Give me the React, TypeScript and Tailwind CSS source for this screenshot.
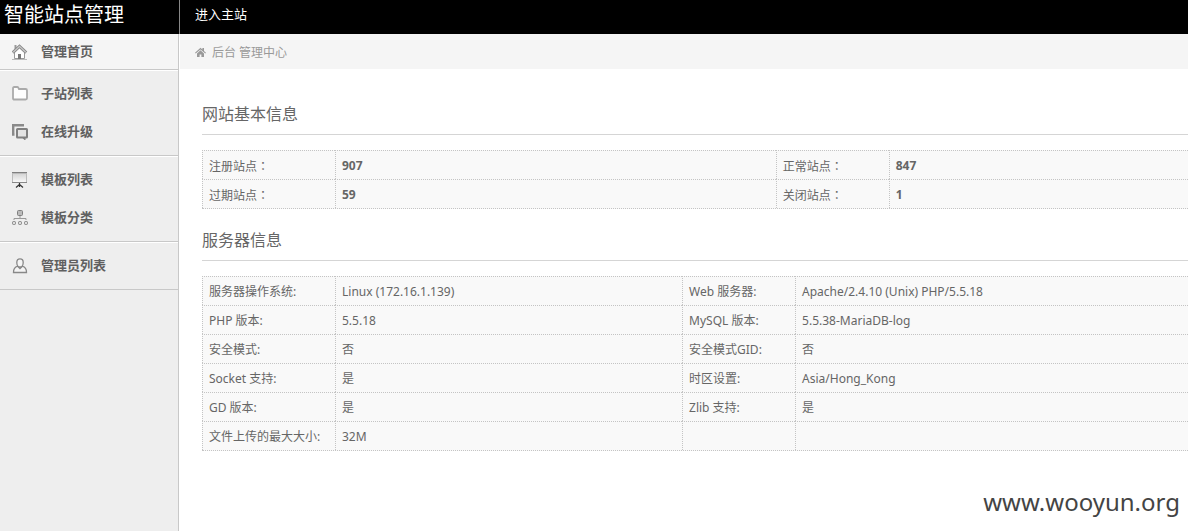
import type { ReactNode } from "react";

interface MenuItem {
  label: string;
  icon: ReactNode;
}

interface InfoTableProps {
  title: string;
  rows: string[][];
  valueWidth: string;
  // summary tables have bold values and full-width colons after the labels
  summary?: boolean;
}

function HomeIcon() {
  return (
    <svg width="16" height="16" viewBox="0 0 16 16" fill="none" aria-hidden="true">
      <path d="M2.5 8.5V14.5H12.5V8.5L7.5 3.8Z" fill="#fff" stroke="#999" />
      <path d="M3.5 1V5" stroke="#999" strokeWidth="2" />
      <path d="M0.8 8.6L7.5 2.2L14.2 8.6" stroke="#888" strokeWidth="3" />
      <path d="M1.2 8.3L7.5 2.3L13.8 8.3" stroke="#c8c8c8" strokeWidth="1.2" />
      <rect x="6" y="10" width="3" height="5" fill="#777" />
      <path d="M0 15.5H15" stroke="#bbb" />
    </svg>
  );
}

function FolderIcon() {
  return (
    <svg width="16" height="16" viewBox="0 0 16 16" aria-hidden="true">
      <path
        d="M1 12.3V2.4Q1 1 2.2 1H5.2Q6 1 6.4 1.8L7 3H13.6Q15 3 15 4.4V12.3Q15 13.5 13.6 13.5H2.4Q1 13.5 1 12.3Z"
        fill="#fdfdfd"
        stroke="#aaa"
        strokeWidth="1.8"
      />
    </svg>
  );
}

function UpgradeIcon() {
  return (
    <svg width="16" height="16" viewBox="0 0 16 16" aria-hidden="true">
      <path d="M2.5 10.5H1.2V1.2H12" fill="none" stroke="#8a8a8a" strokeWidth="2.4" />
      <path d="M10 13.5H13.5V16H12.5Z" fill="#808080" />
      <rect x="5" y="5" width="10" height="8.5" rx="0.5" fill="#e4e4e4" stroke="#808080" strokeWidth="2" />
    </svg>
  );
}

function BoardIcon() {
  return (
    <svg width="16" height="16" viewBox="0 0 16 16" fill="none" aria-hidden="true">
      <defs>
        <linearGradient id="board" x1="0" y1="0" x2="0" y2="1">
          <stop offset="0" stopColor="#d4d4d4" />
          <stop offset="1" stopColor="#fafafa" />
        </linearGradient>
      </defs>
      <rect x="0.5" y="1.5" width="14" height="9" fill="url(#board)" stroke="#bbb" />
      <path d="M0 0.5H15" stroke="#808080" />
      <path d="M0 10.5H15" stroke="#888" />
      <path d="M7.5 11V15M7.5 12.5L4 15.5M7.5 12.5L11 15.5" stroke="#333" strokeWidth="1.2" />
    </svg>
  );
}

function SitemapIcon() {
  return (
    <svg width="16" height="16" viewBox="0 0 16 16" fill="none" aria-hidden="true">
      <rect x="5.5" y="0.5" width="5" height="5" rx="1" fill="#bbb" stroke="#808080" />
      <path d="M8 6V9M2 10V8.5H14V10" stroke="#999" />
      <rect x="0.5" y="11.5" width="3" height="3" rx="1" fill="#ddd" stroke="#808080" />
      <rect x="6.5" y="11.5" width="3" height="3" rx="1" fill="#ddd" stroke="#808080" />
      <rect x="12.5" y="11.5" width="3" height="3" rx="1" fill="#ddd" stroke="#808080" />
    </svg>
  );
}

function UserIcon() {
  return (
    <svg width="16" height="16" viewBox="0 0 16 16" fill="#f4f4f4" stroke="#888" strokeWidth="1.3" aria-hidden="true">
      <path d="M5.6 8.2C2.8 9 1.5 10.4 1.5 14.5H14.5C14.5 10.4 13.2 9 10.4 8.2L8 10.5Z" />
      <path d="M8 0.8C5.8 0.8 4.8 2.2 4.8 4.4C4.8 6.8 6.2 9 8 9C9.8 9 11.2 6.8 11.2 4.4C11.2 2.2 10.2 0.8 8 0.8Z" />
    </svg>
  );
}

function CrumbIcon() {
  return (
    <svg width="11" height="11" viewBox="0 0 11 11" fill="#999" aria-hidden="true">
      <path d="M5.5 0.8L7.4 2.5V1H9V4L11 5.8L10.3 6.6L5.5 2.4L0.7 6.6L0 5.8Z" />
      <path d="M2 6.4L5.5 3.2L9 6.4V10H6.4V7.4H4.6V10H2Z" />
    </svg>
  );
}

const menuGroups: MenuItem[][] = [
  [
    { label: "子站列表", icon: <FolderIcon /> },
    { label: "在线升级", icon: <UpgradeIcon /> },
  ],
  [
    { label: "模板列表", icon: <BoardIcon /> },
    { label: "模板分类", icon: <SitemapIcon /> },
  ],
  [{ label: "管理员列表", icon: <UserIcon /> }],
];

const siteRows = [
  ["注册站点", "907", "正常站点", "847"],
  ["过期站点", "59", "关闭站点", "1"],
];

const serverRows = [
  ["服务器操作系统:", "Linux (172.16.1.139)", "Web 服务器:", "Apache/2.4.10 (Unix) PHP/5.5.18"],
  ["PHP 版本:", "5.5.18", "MySQL 版本:", "5.5.38-MariaDB-log"],
  ["安全模式:", "否", "安全模式GID:", "否"],
  ["Socket 支持:", "是", "时区设置:", "Asia/Hong_Kong"],
  ["GD 版本:", "是", "Zlib 支持:", "是"],
  ["文件上传的最大大小:", "32M", "", ""],
];

function InfoTable({ title, rows, valueWidth, summary }: InfoTableProps) {
  return (
    <section className="pb-[19px]">
      <h2 className="border-b border-[#d5d5d5] pb-2 text-base leading-6">{title}</h2>
      <table className="mt-[15px] w-full table-fixed border-separate border-spacing-0 border-b border-dotted border-[#c4c4c4] bg-[#f9f9f9]">
        <colgroup>
          <col className="w-[133px]" />
          <col className={valueWidth} />
          <col className="w-[113px]" />
          <col />
        </colgroup>
        <tbody>
          {rows.map((row) => (
            <tr key={row[0]}>
              {row.map((cell, i) => (
                <td
                  key={i}
                  className={`h-[29px] whitespace-nowrap border-t border-l border-dotted border-[#c4c4c4] pt-0.5 pl-1.5 leading-5 ${
                    summary && i % 2 === 1 ? "font-bold" : ""
                  }`}
                >
                  {cell}
                  {summary && i % 2 === 0 && (
                    <span className="font-['Noto_Sans_CJK_TC',sans-serif]">：</span>
                  )}
                </td>
              ))}
            </tr>
          ))}
        </tbody>
      </table>
    </section>
  );
}

function MenuLink({ label, icon }: MenuItem) {
  return (
    <a href="#" className="flex h-[38px] items-center gap-[13px] pl-3">
      {icon}
      {label}
    </a>
  );
}

export default function App() {
  return (
    <div className="flex min-h-screen flex-col bg-white font-['Noto_Sans','Noto_Sans_CJK_SC',sans-serif] text-xs text-[#666]">
      <header className="flex h-[34px] bg-black text-white">
        <h1 className="w-[180px] border-r border-[#888] pl-1 text-xl leading-[30px]">智能站点管理</h1>
        <a href="#" className="pl-[15px] text-[13px] leading-7">
          进入主站
        </a>
      </header>

      <div className="flex flex-1">
        <aside className="w-[179px] shrink-0 border-r border-[#c8c8c8] bg-[#eee] text-[13px] font-bold text-[#606060]">
          <a
            href="#"
            className="flex h-9 items-center gap-[13px] border-b border-[#c8c8c8] bg-[#f5f5f5] pl-3"
          >
            <HomeIcon />
            管理首页
          </a>
          <nav>
            {menuGroups.map((group) => (
              <div key={group[0].label} className="border-t border-b border-t-white border-b-[#c8c8c8] py-1">
                {group.map((item) => (
                  <MenuLink key={item.label} {...item} />
                ))}
              </div>
            ))}
          </nav>
        </aside>

        <main className="ml-px min-w-0 flex-1">
          <div className="flex h-[35px] items-center gap-1.5 bg-[#f5f5f5] pt-0.5 pl-[15px] text-[#999]">
            <CrumbIcon />
            <span>后台 管理中心</span>
          </div>
          <div className="pt-[33px] pl-[22px]">
            <InfoTable title="网站基本信息" rows={siteRows} valueWidth="w-[44.7%]" summary />
            <InfoTable title="服务器信息" rows={serverRows} valueWidth="w-[35.2%]" />
          </div>
          <p className="pt-3 pr-2 text-right text-2xl leading-10 text-[#444]">www.wooyun.org</p>
        </main>
      </div>
    </div>
  );
}
